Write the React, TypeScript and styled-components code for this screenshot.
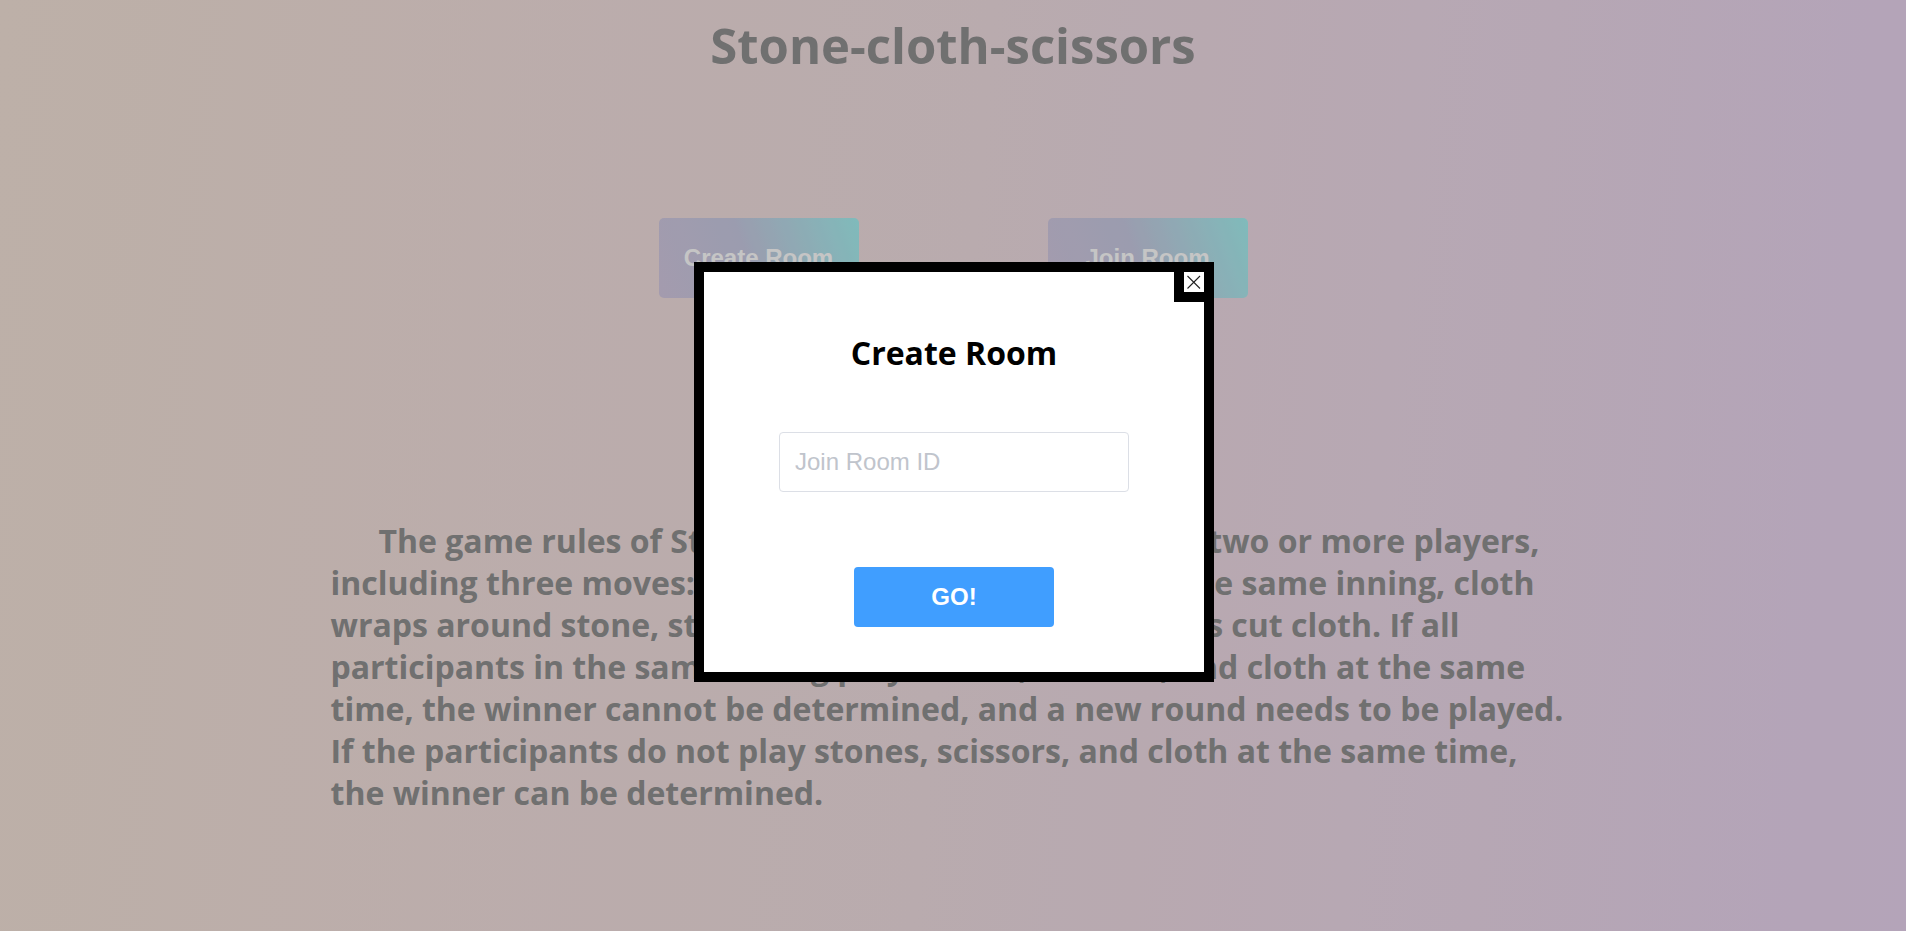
import React from "react";
import styled, { createGlobalStyle } from "styled-components";

const GlobalStyle = createGlobalStyle`
  html, body {
    margin: 0;
    padding: 0;
  }
  body {
    font-family: "Open Sans", "Noto Sans", sans-serif;
    overflow: hidden;
  }
  * { box-sizing: border-box; }
`;

const Page = styled.div`
  min-height: 100vh;
  background: linear-gradient(95deg, #eddcd2 0%, #e8d6da 50%, #e1cde8 100%);
  display: flex;
  flex-direction: column;
  align-items: center;
`;

const Title = styled.h1`
  margin: 15px 0 0;
  font-family: "Open Sans", sans-serif;
  font-weight: 700;
  font-size: 49px;
  line-height: 60px;
  color: #8c8c8c;
`;

const ButtonRow = styled.div`
  display: flex;
  gap: 189px;
  margin-top: 143px;
`;

const EntryButton = styled.button`
  width: 200px;
  height: 80px;
  border: none;
  border-radius: 5px;
  background: linear-gradient(70deg, #cdc2da 0%, #c2c4db 45%, #a0eaea 100%);
  color: #f7f7f7;
  font-family: "Liberation Sans", Arial, sans-serif;
  font-weight: 700;
  font-size: 24px;
  cursor: pointer;
`;

const Rules = styled.p`
  width: 1245px;
  margin: 222px 0 0;
  font-family: "Open Sans", sans-serif;
  font-weight: 700;
  font-size: 32px;
  line-height: 42px;
  color: #8c8c8c;
  text-indent: 48px;
  white-space: nowrap;
`;

const Overlay = styled.div`
  position: fixed;
  inset: 0;
  background: rgba(0, 0, 0, 0.2);
  display: flex;
  justify-content: center;
  align-items: flex-start;
  padding-top: 262px;
`;

const Modal = styled.div`
  position: relative;
  width: 520px;
  height: 420px;
  margin-left: 2px;
  border: 10px solid #000;
  background: #fff;
  display: flex;
  flex-direction: column;
  align-items: center;
  padding-top: 61px;
`;

const CloseButton = styled.button`
  position: absolute;
  top: -10px;
  right: -10px;
  width: 40px;
  height: 40px;
  border: 10px solid #000;
  background: #fff;
  padding: 0;
  margin: 0;
  display: flex;
  align-items: center;
  justify-content: center;
  cursor: pointer;
`;

const ModalTitle = styled.h2`
  margin: 0;
  font-family: "Open Sans", sans-serif;
  font-weight: 700;
  font-size: 32px;
  line-height: 40px;
  color: #000;
`;

const RoomInput = styled.input`
  margin-top: 59px;
  width: 350px;
  height: 60px;
  border: 1px solid #dcdfe6;
  border-radius: 4px;
  padding: 0 15px;
  font-family: "Liberation Sans", Arial, sans-serif;
  font-size: 24px;
  color: #606266;
  outline: none;
  &::placeholder {
    color: #c0c4cc;
  }
`;

const GoButton = styled.button`
  margin-top: 75px;
  width: 200px;
  height: 60px;
  border: none;
  border-radius: 4px;
  background: #409eff;
  color: #fff;
  font-family: "Liberation Sans", Arial, sans-serif;
  font-weight: 700;
  font-size: 24px;
  cursor: pointer;
`;

const lines = [
  "The game rules of Stone-cloth-scissors is a game for two or more players,",
  "including three moves: stones, scissors, and cloth. At the same inning, cloth",
  "wraps around stone, stone crushes scissors and scissors cut cloth. If all",
  "participants in the same inning play stones, scissors, and cloth at the same",
  "time, the winner cannot be determined, and a new round needs to be played.",
  "If the participants do not play stones, scissors, and cloth at the same time,",
  "the winner can be determined.",
];

export default function App() {
  return (
    <>
      <GlobalStyle />
      <Page>
        <Title>Stone-cloth-scissors</Title>
        <ButtonRow>
          <EntryButton>Create Room</EntryButton>
          <EntryButton>Join Room</EntryButton>
        </ButtonRow>
        <Rules>
          {lines.map((l, i) => (
            <React.Fragment key={i}>
              {l}
              {i < lines.length - 1 && <br />}
            </React.Fragment>
          ))}
        </Rules>
      </Page>
      <Overlay>
        <Modal>
          <CloseButton aria-label="close">
            <svg width="20" height="20" viewBox="0 0 20 20">
              <line x1="3.5" y1="4" x2="16" y2="16.5" stroke="#222" strokeWidth="1.1" />
              <line x1="16" y1="4" x2="3.5" y2="16.5" stroke="#222" strokeWidth="1.1" />
            </svg>
          </CloseButton>
          <ModalTitle>Create Room</ModalTitle>
          <RoomInput placeholder="Join Room ID" />
          <GoButton>GO!</GoButton>
        </Modal>
      </Overlay>
    </>
  );
}
